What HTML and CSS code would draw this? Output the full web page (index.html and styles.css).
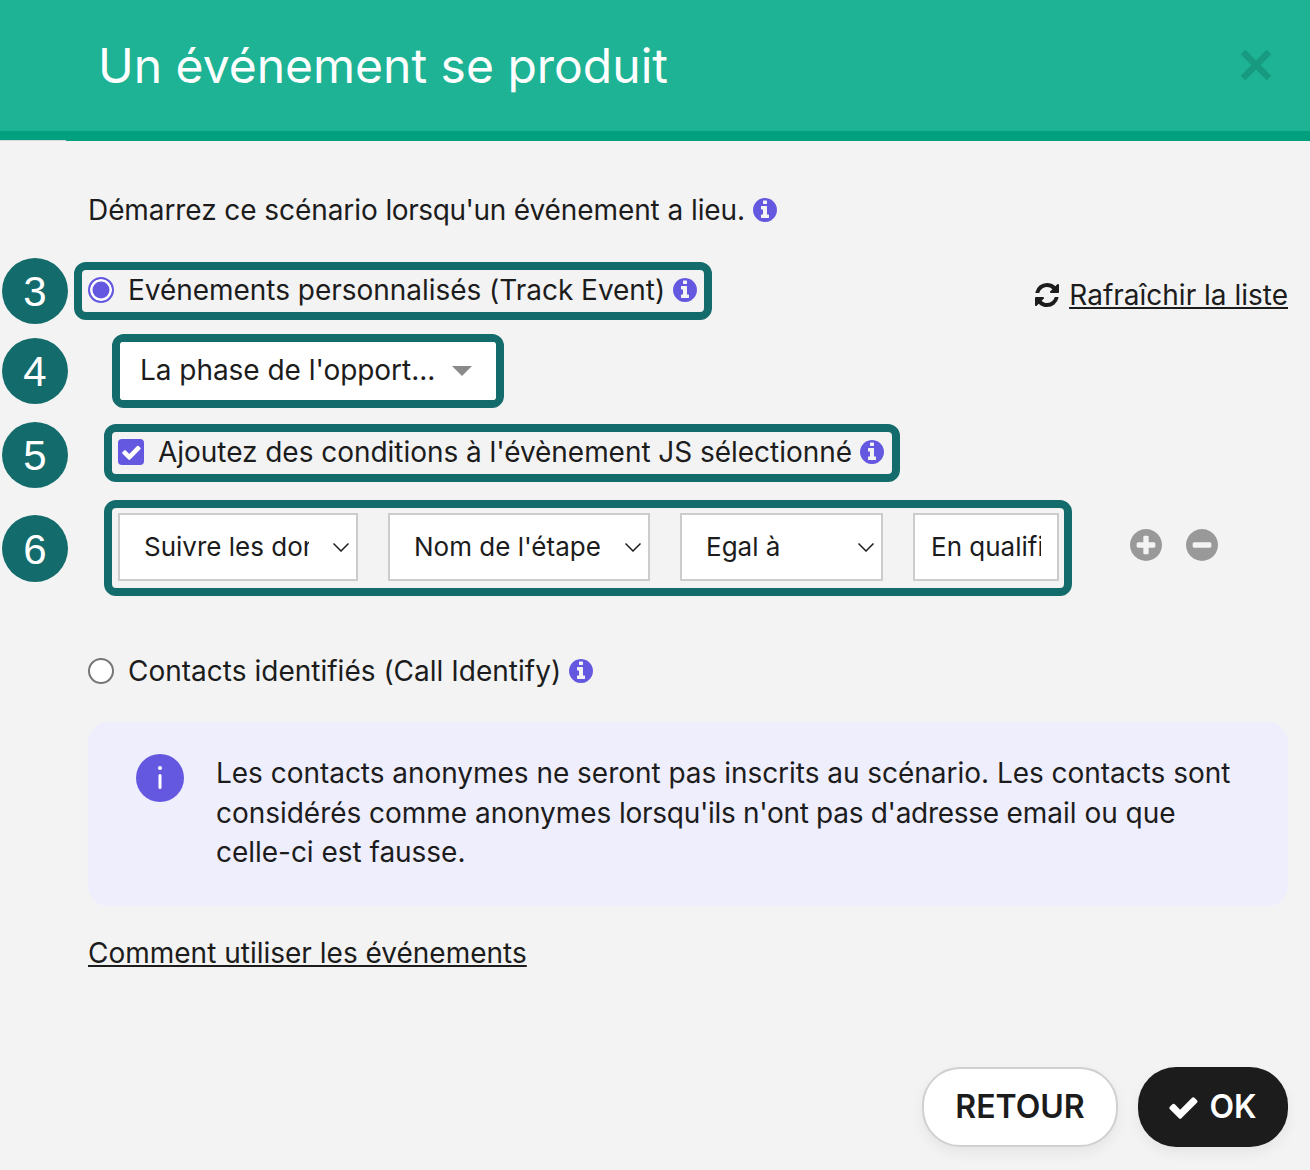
FILE: index.html
```html
<!DOCTYPE html>
<html lang="fr">
<head>
<meta charset="utf-8">
<title>Un événement se produit</title>
<link rel="stylesheet" href="styles.css">
</head>
<body>
<svg class="sprite" aria-hidden="true">
  <symbol id="i-info" viewBox="0 0 1536 1536"><path d="M1024 1248v-160q0-14-9-23t-23-9h-96v-512q0-14-9-23t-23-9h-320q-14 0-23 9t-9 23v160q0 14 9 23t23 9h96v320h-96q-14 0-23 9t-9 23v160q0 14 9 23t23 9h448q14 0 23-9t9-23zm-128-896v-160q0-14-9-23t-23-9h-192q-14 0-23 9t-9 23v160q0 14 9 23t23 9h192q14 0 23-9t9-23zm640 416q0 209-103 385.5t-279.5 279.5-385.5 103-385.5-103-279.5-279.5-103-385.5 103-385.5 279.5-279.5 385.5-103 385.5 103 279.5 279.5 103 385.5z"/></symbol>
  <symbol id="i-plus" viewBox="0 0 1536 1536"><path d="M1216 832v-128q0-26-19-45t-45-19h-256v-256q0-26-19-45t-45-19h-128q-26 0-45 19t-19 45v256h-256q-26 0-45 19t-19 45v128q0 26 19 45t45 19h256v256q0 26 19 45t45 19h128q26 0 45-19t19-45v-256h256q26 0 45-19t19-45zm320-64q0 209-103 385.5t-279.5 279.5-385.5 103-385.5-103-279.5-279.5-103-385.5 103-385.5 279.5-279.5 385.5-103 385.5 103 279.5 279.5 103 385.5z"/></symbol>
  <symbol id="i-minus" viewBox="0 0 1536 1536"><path d="M1216 832v-128q0-26-19-45t-45-19h-768q-26 0-45 19t-19 45v128q0 26 19 45t45 19h768q26 0 45-19t19-45zm320-64q0 209-103 385.5t-279.5 279.5-385.5 103-385.5-103-279.5-279.5-103-385.5 103-385.5 279.5-279.5 385.5-103 385.5 103 279.5 279.5 103 385.5z"/></symbol>
  <symbol id="i-sync" viewBox="0 0 1536 1536"><path d="M1511 928q0 5-1 7-64 268-268 434.5t-478 166.5q-146 0-282.5-55t-243.5-157l-129 129q-19 19-45 19t-45-19-19-45v-448q0-26 19-45t45-19h448q26 0 45 19t19 45-19 45l-137 137q71 66 161 102t187 36q134 0 250-65t186-179q11-17 53-117 8-23 30-23h192q13 0 22.5 9.5t9.5 22.5zm25-800v448q0 26-19 45t-45 19h-448q-26 0-45-19t-19-45 19-45l138-138q-148-137-349-137-134 0-250 65t-186 179q-11 17-53 117-8 23-30 23h-199q-13 0-22.5-9.5t-9.5-22.5v-7q65-268 270-434.5t480-166.5q146 0 284 55.5t245 156.5l130-129q19-19 45-19t45 19 19 45z"/></symbol>
  <symbol id="i-check" viewBox="100 100 1600 1600"><path d="M1671 566q0 40-28 68l-724 724-136 136q-28 28-68 28t-68-28l-136-136-362-362q-28-28-28-68t28-68l136-136q28-28 68-28t68 28l294 295 656-657q28-28 68-28t68 28l136 136q28 28 28 68z"/></symbol>
  <symbol id="i-chevron" viewBox="0 0 16 10"><path d="M.5 1.5l7.5 7.5 7.5-7.5" fill="none" stroke="currentColor" stroke-width="1.5"/></symbol>
</svg>

<header class="header">
  <h1 class="title">Un événement se produit</h1>
  <svg class="close" viewBox="0 0 32 32" aria-hidden="true"><path d="M3 3l26 26M29 3L3 29"/></svg>
</header>

<main class="main">
  <p class="line intro"><span>Démarrez ce scénario <span class="tight-word">lorsqu'un</span> événement a lieu.</span><svg class="info info-intro"><use href="#i-info"/></svg></p>

  <div class="row row-track">
    <span class="badge badge-3">3</span>
    <label class="mark mark-track line">
      <span class="radio radio-on"></span>
      <span class="label label-track">Evénements personnalisés (Track Event)</span>
      <svg class="info"><use href="#i-info"/></svg>
    </label>
    <a class="link refresh" href="#"><svg class="sync"><use href="#i-sync"/></svg><span class="underline">Rafraîchir la liste</span></a>
  </div>

  <div class="row row-event">
    <span class="badge badge-4">4</span>
    <div class="mark mark-event">
      <div class="dropdown line">
        <span class="dropdown-text">La phase de l'opport...</span>
        <span class="caret"></span>
      </div>
    </div>
  </div>

  <div class="row row-conditions">
    <span class="badge badge-5">5</span>
    <label class="mark mark-conditions line">
      <span class="checkbox"><svg class="checkbox-tick"><use href="#i-check"/></svg></span>
      <span class="label label-conditions">Ajoutez des conditions à l'évènement JS sélectionné</span>
      <svg class="info"><use href="#i-info"/></svg>
    </label>
  </div>

  <div class="row row-filter">
    <span class="badge badge-6">6</span>
    <div class="mark mark-filter">
      <div class="field field-a"><span class="field-text clip-a">Suivre les données</span><svg class="chevron"><use href="#i-chevron"/></svg></div>
      <div class="field field-b"><span class="field-text">Nom de l'étape</span><svg class="chevron"><use href="#i-chevron"/></svg></div>
      <div class="field field-c"><span class="field-text">Egal à</span><svg class="chevron"><use href="#i-chevron"/></svg></div>
      <div class="field field-d"><span class="field-text clip-d">En qualification</span></div>
    </div>
    <div class="actions">
      <svg class="action"><use href="#i-plus"/></svg>
      <svg class="action"><use href="#i-minus"/></svg>
    </div>
  </div>

  <label class="row row-identify line">
    <span class="radio"></span>
    <span class="label label-identify">Contacts identifiés (Call Identify)</span>
    <svg class="info"><use href="#i-info"/></svg>
  </label>

  <section class="notice">
    <svg class="notice-icon" viewBox="0 0 48 48" aria-hidden="true"><circle cx="24" cy="24" r="24"/><circle class="notice-i" cx="24" cy="14" r="2"/><rect class="notice-i" x="22.5" y="20" width="3" height="15" rx="1.5"/></svg>
    <p class="notice-text">Les contacts anonymes ne seront pas inscrits au scénario. Les contacts sont considérés comme anonymes <span class="tight-phrase">lorsqu'ils n'ont pas d'adresse</span> email ou que celle-ci est fausse.</p>
  </section>

  <p class="howto line"><a class="link underline" href="#">Comment utiliser les événements</a></p>

  <footer class="footer">
    <button class="btn btn-back" type="button">RETOUR</button>
    <button class="btn btn-ok" type="button"><svg class="btn-check"><use href="#i-check"/></svg>OK</button>
  </footer>
</main>
</body>
</html>
```

FILE: styles.css
```css
* { box-sizing: border-box; }

html, body { margin: 0; padding: 0; }

body {
  width: 1310px;
  height: 1170px;
  overflow: hidden;
  background: #f3f3f3;
  color: #1c1c1c;
  font-family: Inter, "Liberation Sans", sans-serif;
  font-size: 28px;
}

.sprite { display: none; }

.header {
  position: relative;
  height: 141px;
  background: #1db394;
  border-bottom: 10px solid #02a07f;
  padding: 0 38px 0 98px;
  display: flex;
  align-items: center;
  justify-content: space-between;
}

.header::after {
  content: "";
  position: absolute;
  left: 0;
  bottom: -10px;
  width: 66px;
  height: 1px;
  background: #d4dbd9;
}

.title {
  margin: 0;
  color: #fff;
  font-size: 48px;
  font-weight: 400;
  line-height: 1;
}

.close {
  width: 32px;
  height: 32px;
  margin-bottom: 2px;
  fill: none;
  stroke: #189a80;
  stroke-width: 6.5;
}

.main {
  padding: 49px 22px 0 88px;
}

.line {
  line-height: 40px;
}

.tight-word {
  letter-spacing: -0.4px;
}

.tight-phrase {
  letter-spacing: -0.3px;
}

.intro {
  margin: 0;
  display: flex;
  align-items: center;
  letter-spacing: -0.08px;
}

.info {
  width: 24px;
  height: 24px;
  fill: #6558e0;
  flex: none;
}

.info-intro { margin-left: 8px; }

.row {
  position: relative;
  display: flex;
}

.badge {
  position: absolute;
  left: -86px;
  width: 66px;
  height: 66px;
  border-radius: 50%;
  background: #136c6b;
  color: #fff;
  font-family: "Liberation Sans", Arial, sans-serif;
  font-size: 42px;
  line-height: 68px;
  text-align: center;
}

.badge-3 { top: -4px; }
.badge-4 { top: 4px; }
.badge-5 { top: -2px; }
.badge-6 { top: 15px; height: 67px; line-height: 70px; }

.mark {
  border: 8px solid #136c6b;
  border-radius: 12px;
}

.row-track {
  margin-top: 32px;
  justify-content: space-between;
}

.mark-track {
  margin-left: -14px;
  width: 638px;
  height: 58px;
  padding: 0 0 2px 6px;
  display: flex;
  align-items: center;
}

.radio {
  width: 26px;
  height: 26px;
  border-radius: 50%;
  border: 2px solid #767676;
  background: #fff;
  flex: none;
}

.radio-on {
  border-color: #6558e0;
  background: #6558e0;
  box-shadow: inset 0 0 0 2.5px #fff;
}

.label {
  margin: 0 8px 0 14px;
}

.label-track { letter-spacing: -0.03px; }
.label-conditions { letter-spacing: -0.04px; }
.label-identify { letter-spacing: 0.01px; }

.refresh {
  margin-top: 13px;
  display: flex;
  align-items: center;
  height: 40px;
}

.link { color: #1c1c1c; }

.underline { text-decoration: underline; }

.sync {
  width: 24px;
  height: 24px;
  margin-right: 10px;
  fill: #1c1c1c;
}

.row-event { margin-top: 14px; }

.mark-event {
  margin-left: 24px;
  width: 392px;
  height: 74px;
}

.dropdown {
  height: 100%;
  background: #fff;
  border-radius: 3px;
  padding: 0 24px 2px 20px;
  display: flex;
  align-items: center;
  justify-content: space-between;
}

.dropdown-text { letter-spacing: -0.04px; }

.caret {
  width: 0;
  height: 0;
  margin-top: 2px;
  border-left: 10px solid transparent;
  border-right: 10px solid transparent;
  border-top: 10px solid #8a8a8a;
}

.row-conditions { margin-top: 16px; }

.mark-conditions {
  margin-left: 16px;
  width: 796px;
  height: 58px;
  padding: 0 0 2px 6px;
  display: flex;
  align-items: center;
}

.checkbox {
  width: 26px;
  height: 26px;
  border-radius: 4px;
  background: #6558e0;
  display: flex;
  align-items: center;
  justify-content: center;
  flex: none;
}

.checkbox-tick {
  width: 19px;
  height: 19px;
  fill: #fff;
}

.row-filter {
  margin-top: 18px;
  align-items: center;
}

.mark-filter {
  margin-left: 16px;
  width: 968px;
  height: 96px;
  padding: 5px 5px 7px 6px;
  display: flex;
  justify-content: space-between;
}

.field {
  height: 68px;
  background: #fff;
  border: 2px solid #cccccc;
  padding-bottom: 2px;
  display: flex;
  align-items: center;
  font-size: 26px;
  position: relative;
}

.field-a { width: 240px; padding-left: 24px; }
.field-b { width: 262px; padding-left: 24px; }
.field-c { width: 203px; padding-left: 24px; }
.field-d { width: 146px; padding-left: 16px; }

.field-text {
  white-space: nowrap;
  overflow: hidden;
}

.clip-a { width: 165px; }
.clip-d { width: 110px; }

.chevron {
  position: absolute;
  right: 7px;
  top: 27px;
  width: 16px;
  height: 10px;
  color: #1c1c1c;
}

.actions {
  margin-left: 58px;
  margin-bottom: 6px;
  display: flex;
  gap: 24px;
}

.action {
  width: 32px;
  height: 32px;
  fill: #999999;
}

.row-identify {
  margin-top: 55px;
  align-items: center;
}

.notice {
  margin-top: 31px;
  height: 184px;
  padding: 32px 32px 0 48px;
  background: #efeefc;
  border-radius: 20px;
  display: flex;
  align-items: flex-start;
  gap: 32px;
}

.notice-icon {
  width: 48px;
  height: 48px;
  flex: none;
  fill: #6558e0;
}

.notice-i { fill: #fff; }

.notice-text {
  margin: 0;
  line-height: 39.5px;
  letter-spacing: -0.03px;
}

.howto { margin: 27px 0 0; }

.footer {
  margin-top: 94px;
  display: flex;
  justify-content: flex-end;
  gap: 20px;
}

.btn {
  height: 80px;
  padding: 0 0 2px;
  border-radius: 38px;
  font-family: Inter, "Liberation Sans", sans-serif;
  font-size: 32px;
  font-weight: 600;
  box-shadow: 0 6px 14px rgba(0, 0, 0, 0.06);
}

.btn-back {
  width: 196px;
  background: #fff;
  color: #1c1c1c;
  border: 2px solid #d0d0d0;
}

.btn-ok {
  width: 150px;
  background: #1c1c1c;
  color: #fff;
  border: none;
  display: flex;
  align-items: center;
  justify-content: center;
}

.btn-check {
  width: 29px;
  height: 29px;
  fill: #fff;
  margin: 2px 11px 0 0;
}
```
